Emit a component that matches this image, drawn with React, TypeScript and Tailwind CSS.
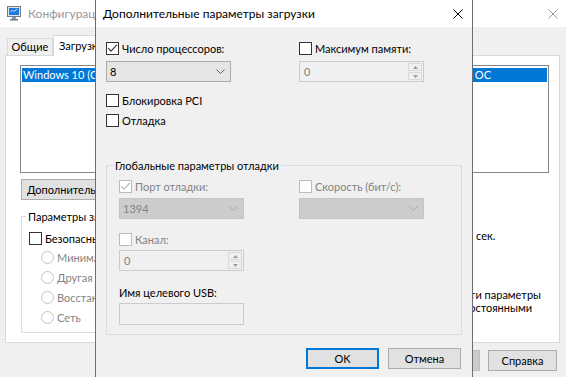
import React from "react";

type BoxProps = { checked?: boolean; disabled?: boolean };

const CheckBox = ({ checked, disabled }: BoxProps) => (
  <span
    className={`flex h-[13px] w-[13px] shrink-0 items-center justify-center border bg-white ${
      disabled ? "border-[#bcbcbc]" : "border-[#333333]"
    }`}
  >
    {checked && (
      <svg width="11" height="11" viewBox="0 0 11 11">
        <path d="M1.2 5.2 L4 8.2 L9.8 1.8" fill="none" stroke={disabled ? "#b5b5b5" : "#333333"} strokeWidth="1.1" />
      </svg>
    )}
  </span>
);

const CheckRow = ({ label, checked, disabled }: BoxProps & { label: string }) => (
  <div className="flex h-[13px] items-center gap-[3px]">
    <CheckBox checked={checked} disabled={disabled} />
    <span className={`whitespace-nowrap leading-[13px] ${disabled ? "text-[#838383]" : "text-black"}`}>{label}</span>
  </div>
);

// label is clipped where the dialog window covers it
const Radio = ({ label }: { label: string }) => (
  <div className="flex h-[13px] items-center gap-[3px]">
    <span className="h-[13px] w-[13px] shrink-0 rounded-full border border-[#c4c4c4] bg-white" />
    <span className="w-[38px] overflow-hidden whitespace-nowrap leading-[13px] text-[#838383]">{label}</span>
  </div>
);

const Chevron = ({ color }: { color: string }) => (
  <svg width="9" height="5" viewBox="0 0 9 5">
    <path d="M0.5 0.5 L4.5 4.5 L8.5 0.5" fill="none" stroke={color} strokeWidth="1" />
  </svg>
);

const Combo = ({ value, disabled }: { value: string; disabled?: boolean }) => (
  <div
    className={`flex h-[21px] w-[125px] items-center justify-between border pl-[3px] pr-[5px] ${
      disabled ? "border-[#c4c4c4] bg-[#cccccc] text-[#838383]" : "border-[#acacac] bg-[#e5e5e5] text-black"
    }`}
  >
    <span className="leading-[15px]">{value}</span>
    <Chevron color={disabled ? "#a8a8a8" : "#606060"} />
  </div>
);

const Spin = ({ value }: { value: string }) => (
  <div className="flex h-[21px] w-[125px] border border-[#cccccc] bg-[#f0f0f0]">
    <span className="flex flex-1 items-center pl-[4px] leading-[15px] text-[#838383]">{value}</span>
    <div className="flex w-[16px] flex-col gap-[1px] p-px">
      <span className="flex flex-1 items-center justify-center border border-[#d9d9d9]">
        <svg width="5" height="3" viewBox="0 0 5 3">
          <path d="M0 3 L2.5 0 L5 3 Z" fill="#9a9a9a" />
        </svg>
      </span>
      <span className="flex flex-1 items-center justify-center border border-[#d9d9d9]">
        <svg width="5" height="3" viewBox="0 0 5 3">
          <path d="M0 0 L5 0 L2.5 3 Z" fill="#9a9a9a" />
        </svg>
      </span>
    </div>
  </div>
);

const Btn = ({ children, w, disabled, focus }: { children?: React.ReactNode; w: string; disabled?: boolean; focus?: boolean }) => (
  <div
    className={`flex h-[21px] items-center justify-center ${w} ${
      focus
        ? "border-2 border-[#0078d7] bg-[#e1e1e1]"
        : disabled
          ? "border border-[#bfbfbf] bg-[#cccccc] text-[#838383]"
          : "border border-[#adadad] bg-[#e1e1e1]"
    }`}
  >
    {children && <span className="leading-[15px]">{children}</span>}
  </div>
);

const CloseGlyph = ({ color }: { color: string }) => (
  <svg width="10" height="10" viewBox="0 0 10 10">
    <path d="M0.5 0.5 L9.5 9.5 M9.5 0.5 L0.5 9.5" stroke={color} strokeWidth="1" />
  </svg>
);

const MsconfigIcon = () => (
  <svg width="14" height="15" viewBox="0 0 14 15">
    <rect x="0.5" y="0.5" width="13" height="10" fill="#dfe6ee" stroke="#6f7c8a" />
    <rect x="2" y="2" width="10" height="7" fill="#1f7ae0" />
    <path d="M3.5 6 L5.5 4 L7 5.5 L10 3" fill="none" stroke="#bfe0ff" strokeWidth="1" />
    <rect x="5" y="11" width="4" height="2" fill="#8a96a3" />
    <rect x="3" y="13" width="8" height="1.5" fill="#6f7c8a" />
  </svg>
);

const MainWindow = () => (
  <div className="flex h-full flex-col">
    {/* title bar (inactive window) */}
    <div className="flex h-[27px] shrink-0 items-center bg-white">
      <span className="ml-[7px]">
        <MsconfigIcon />
      </span>
      <span className="ml-[7px] w-[67px] overflow-hidden whitespace-nowrap text-[12px] leading-[15px] text-[#999999]">
        Конфигурация системы
      </span>
      <span className="ml-auto mr-[8px] flex">
        <CloseGlyph color="#999999" />
      </span>
    </div>

    {/* tabs */}
    <div className="flex h-[29px] shrink-0 items-end pl-[7px]">
      <div className="flex h-[18px] w-[46px] items-center justify-center border border-b-0 border-[#d9d9d9] bg-[#f0f0f0]">Общие</div>
      <div className="relative z-10 flex h-[21px] w-[62px] items-center border border-b-0 border-[#d9d9d9] bg-white pl-[5px]">
        <span className="w-[36px] overflow-hidden whitespace-nowrap">Загрузка</span>
      </div>
    </div>

    {/* tab page */}
    <div className="-mt-px ml-[5px] flex h-[288px] w-[555px] shrink-0 flex-col border border-[#d9d9d9] bg-white">
      <div className="ml-[14px] mt-[9px] h-[108px] w-[529px] border border-[#828790] bg-white">
        <div className="mx-px mt-[2px] flex h-[14px] items-center justify-between bg-[#0078d7] text-white">
          <span className="w-[73px] overflow-hidden whitespace-nowrap pl-px leading-[14px]">Windows 10 (C:\WINDOWS) : Текущая ОС</span>
          <span className="pr-[56px] leading-[14px]">ОС</span>
        </div>
      </div>

      <div className="ml-[15px] mt-[6px] flex">
        <div className="flex h-[21px] w-[150px] items-center border border-[#adadad] bg-[#e1e1e1] pl-[5px]">
          <span className="w-[68px] overflow-hidden whitespace-nowrap leading-[15px]">Дополнительные параметры...</span>
        </div>
      </div>

      <div className="ml-[15px] mt-[9px] flex">
        <fieldset className="w-[362px] border border-[#dcdcdc] pb-[8px] pl-[7px] pt-[8px]">
          <legend className="-ml-[3px] w-[69px] overflow-hidden whitespace-nowrap px-[2px] leading-[15px]">Параметры загрузки</legend>
          <div className="flex h-[13px] items-center gap-[3px]">
            <CheckBox />
            <span className="w-[51px] overflow-hidden whitespace-nowrap leading-[13px]">Безопасный режим</span>
          </div>
          <div className="ml-[12px] mt-[6px] flex flex-col gap-[7px]">
            <Radio label="Минимальная" />
            <Radio label="Другая оболочка" />
            <Radio label="Восстановление Active Directory" />
            <Radio label="Сеть" />
          </div>
        </fieldset>

        <div className="ml-[17px] flex flex-col">
          <div className="mt-[16px] flex h-[20px] items-center gap-[4px]">
            <span className="h-[20px] w-[72px] border border-[#7a7a7a]" />
            <span className="leading-[15px]">сек.</span>
          </div>
          <div className="mt-[43px] flex">
            <span className="mt-px">
              <CheckBox />
            </span>
            <div className="ml-[60px] flex w-[86px] flex-col overflow-hidden leading-[13px]">
              <div className="flex justify-end whitespace-nowrap pr-[18px]">Сделать эти параметры</div>
              <div className="flex justify-end whitespace-nowrap pr-[27px]">загрузки постоянными</div>
            </div>
          </div>
        </div>
      </div>
    </div>

    {/* bottom buttons */}
    <div className="mt-[7px] flex justify-end gap-[8px] pr-[9px]">
      <Btn w="w-[69px]" disabled />
      <Btn w="w-[69px]">Справка</Btn>
    </div>
  </div>
);

const BootDialog = () => (
  <div className="absolute left-[95px] top-0 z-20 flex h-[400px] w-[378px] flex-col border-x border-[#6e6e6e] bg-[#f0f0f0]">
    <div className="flex h-[27px] shrink-0 items-center bg-white">
      <span className="ml-[7px] text-[12px] leading-[15px]">Дополнительные параметры загрузки</span>
      <span className="ml-auto mr-[9px] flex">
        <CloseGlyph color="#000000" />
      </span>
    </div>

    <div className="flex flex-col pl-[10px] pt-[15px]">
      <div className="flex">
        <div className="flex w-[193px] flex-col">
          <CheckRow label="Число процессоров:" checked />
          <div className="mt-[6px]">
            <Combo value="8" />
          </div>
        </div>
        <div className="flex flex-col">
          <CheckRow label="Максимум памяти:" />
          <div className="mt-[6px]">
            <Spin value="0" />
          </div>
        </div>
      </div>

      <div className="mt-[12px]">
        <CheckRow label="Блокировка PCI" />
      </div>
      <div className="mt-[7px]">
        <CheckRow label="Отладка" />
      </div>

      <fieldset className="mt-[31px] w-[356px] border border-[#dcdcdc] pb-[9px] pl-[12px] pt-[7px]">
        <legend className="-ml-[6px] px-[2px] leading-[15px]">Глобальные параметры отладки</legend>
        <div className="flex">
          <div className="flex w-[180px] flex-col">
            <CheckRow label="Порт отладки:" checked disabled />
            <div className="mt-[5px]">
              <Combo value="1394" disabled />
            </div>
          </div>
          <div className="flex flex-col">
            <CheckRow label="Скорость (бит/с):" disabled />
            <div className="mt-[5px]">
              <Combo value="" disabled />
            </div>
          </div>
        </div>
        <div className="mt-[14px]">
          <CheckRow label="Канал:" disabled />
        </div>
        <div className="mt-[4px]">
          <Spin value="0" />
        </div>
        <div className="mt-[14px] leading-[15px]">Имя целевого USB:</div>
        <div className="mt-[3px] h-[22px] w-[125px] border border-[#cccccc] bg-[#f0f0f0]" />
      </fieldset>

      <div className="mt-[13px] flex justify-end gap-[9px] pr-[11px]">
        <Btn w="w-[73px]" focus>
          OK
        </Btn>
        <Btn w="w-[73px]">Отмена</Btn>
      </div>
    </div>
  </div>
);

export default function App() {
  return (
    <div className="relative h-[377px] w-[566px] overflow-hidden bg-[#f0f0f0] font-['Lato','Noto_Sans',sans-serif] text-[11px] text-black">
      <MainWindow />
      <BootDialog />
    </div>
  );
}
